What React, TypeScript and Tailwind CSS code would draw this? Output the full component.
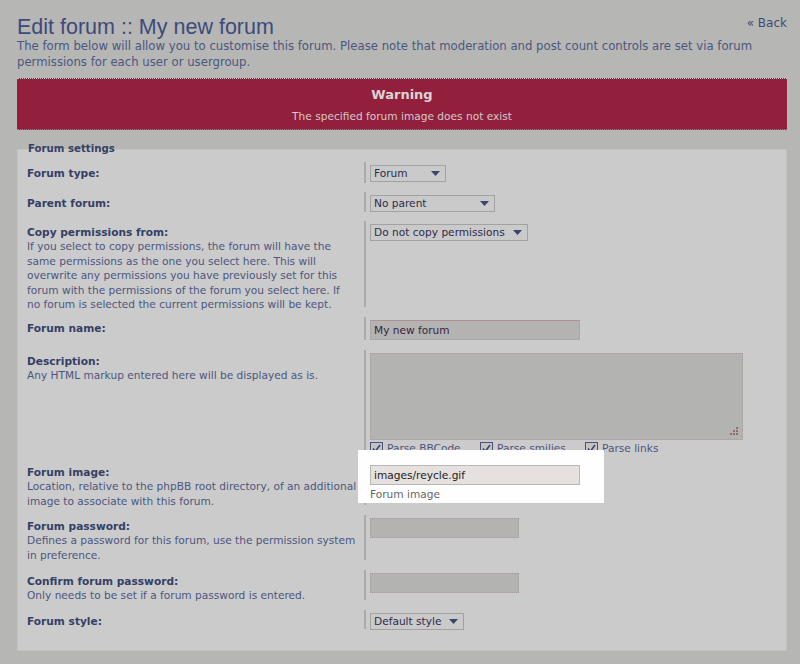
import React from "react";

const F = { fontFamily: '"DejaVu Sans", Verdana, sans-serif' };

function Arrow() {
  return (
    <svg width="9" height="5" viewBox="0 0 9 5" className="shrink-0">
      <path d="M0 0 H9 L4.5 5 Z" fill="#3b4470" />
    </svg>
  );
}

function Select({ label, w }: { label: string; w: string }) {
  return (
    <div className={`${w} h-[17px] flex items-center justify-between pl-[3px] pr-[5px] bg-[#cacaca] border border-[#a2a2a2] text-[10.6px] text-[#2e2a4a]`}>
      <span className="leading-none">{label}</span>
      <Arrow />
    </div>
  );
}

function Check({ label }: { label: string }) {
  return (
    <div className="flex items-center gap-[4px]">
      <svg width="13" height="13" viewBox="0 0 13 13">
        <rect x="0.5" y="0.5" width="12" height="12" fill="#c4c4c4" stroke="#4a5278" />
        <path d="M3 6.5 L5.3 9.5 L10 3" fill="none" stroke="#3b4470" strokeWidth="1.6" />
      </svg>
      <span className="text-[10.6px] text-[#4b5680] leading-none">{label}</span>
    </div>
  );
}

function Row({
  h,
  mt,
  label,
  desc,
  children,
}: {
  h: string;
  mt: string;
  label: string;
  desc?: React.ReactNode;
  children?: React.ReactNode;
}) {
  return (
    <div className={`flex ${h} ${mt}`}>
      <div className="w-[346px] pl-[9px] pt-[4px] pr-[7px] text-[10.6px] leading-[14.4px]">
        <div className="font-bold text-[#353f66]">{label}</div>
        {desc && <div className="text-[#4b5680]">{desc}</div>}
      </div>
      <div className="relative flex-1 border-l-2 border-[#ababab] pl-[4px] pt-[3px]">{children}</div>
    </div>
  );
}

export default function App() {
  return (
    <div style={F} className="w-[800px] h-[664px] overflow-hidden bg-[#b6b6b4] pl-[17px] pr-[13px] pt-[14px]">
      <div className="flex justify-between items-start">
        <h1
          style={{ fontFamily: '"Liberation Sans", Arial, sans-serif' }}
          className="text-[21.5px] leading-[26px] text-[#3d4a7c]"
        >
          Edit forum :: My new forum
        </h1>
        <a className="text-[12px] leading-[16px] text-[#3d4a7c] mt-[1px]">« Back</a>
      </div>
      <p className="text-[11.7px] leading-[16px] text-[#4b5680] mt-[-2px]">
        The form below will allow you to customise this forum. Please note that moderation and post count controls are set via forum permissions for each user or usergroup.
      </p>
      <div className="mt-[8px] h-[52px] bg-[#921f3b] border-t border-[#c8c8c8] border-b border-dotted border-b-[#b07080] flex flex-col items-center">
        <div className="font-bold text-[13px] leading-[16px] text-[#d8d4d6] mt-[8px]">Warning</div>
        <div className="text-[10.6px] leading-[14px] text-[#d2cacd] mt-[6px]">The specified forum image does not exist</div>
      </div>
      <fieldset className="mt-[12px] h-[509px] bg-[#cbcbcb] border border-[#c2c2c2] px-0 pb-0 pt-0 m-0">
        <legend className="ml-[9px] px-[1px] text-[10.2px] font-bold text-[#353f66] leading-[14px]">Forum settings</legend>
        <div className="pt-[6px]">
          <Row h="h-[21px]" mt="mt-0" label="Forum type:">
            <Select label="Forum" w="w-[76px]" />
          </Row>
          <Row h="h-[20px]" mt="mt-[9px]" label="Parent forum:">
            <Select label="No parent" w="w-[125px]" />
          </Row>
          <Row
            h="h-[86px]"
            mt="mt-[9px]"
            label="Copy permissions from:"
            desc={
              <>
                If you select to copy permissions, the forum will have the same permissions as the one you select here. This will overwrite any permissions you have previously set for this forum with the permissions of the forum you select here. If
                <br />
                no forum is selected the current permissions will be kept.
              </>
            }
          >
            <Select label="Do not copy permissions" w="w-[158px]" />
          </Row>
          <Row h="h-[23px]" mt="mt-[10px]" label="Forum name:">
            <div className="w-[210px] h-[20px] bg-[#b3b3b1] border border-[#a8a8a8] border-t-[#b09090] text-[10.6px] text-[#3b2340] pl-[3px] leading-[18px]">
              My new forum
            </div>
          </Row>
          <Row
            h="h-[103px]"
            mt="mt-[10px]"
            label="Description:"
            desc="Any HTML markup entered here will be displayed as is."
          >
            <div className="relative w-[373px] h-[87px] bg-[#b3b3b1] border border-dotted border-[#a89a9a]">
              <svg width="10" height="10" viewBox="0 0 10 10" className="absolute right-[3px] bottom-[3px]">
                <rect x="7" y="1" width="2" height="2" fill="#8a6e72" />
                <rect x="4" y="4" width="2" height="2" fill="#8a6e72" />
                <rect x="7" y="4" width="2" height="2" fill="#8a6e72" />
                <rect x="1" y="7" width="2" height="2" fill="#8a6e72" />
                <rect x="4" y="7" width="2" height="2" fill="#8a6e72" />
                <rect x="7" y="7" width="2" height="2" fill="#8a6e72" />
              </svg>
            </div>
            <div className="flex mt-[2px]">
              <div className="w-[110px]"><Check label="Parse BBCode" /></div>
              <div className="w-[105px]"><Check label="Parse smilies" /></div>
              <Check label="Parse links" />
            </div>
          </Row>
          <Row
            h="h-[44px]"
            mt="mt-[8px]"
            label="Forum image:"
            desc="Location, relative to the phpBB root directory, of an additional image to associate with this forum."
          >
            <div className="absolute left-[-8px] top-[-11px] w-[246px] h-[53px] bg-[#fefefe]" />
            <div className="relative mt-[1px]">
              <div className="w-[210px] h-[20px] bg-[#e6e1df] border border-[#b8b8b8] text-[10.6px] text-[#222] pl-[3px] leading-[18px]">
                images/reycle.gif
              </div>
              <div className="text-[10.6px] leading-[14px] text-[#666] mt-[2px]">Forum image</div>
            </div>
          </Row>
          <Row
            h="h-[45px]"
            mt="mt-[10px]"
            label="Forum password:"
            desc="Defines a password for this forum, use the permission system in preference."
          >
            <div className="w-[149px] h-[20px] bg-[#b3b3b1] border border-dotted border-[#a89a9a]" />
          </Row>
          <Row
            h="h-[30px]"
            mt="mt-[10px]"
            label="Confirm forum password:"
            desc="Only needs to be set if a forum password is entered."
          >
            <div className="w-[149px] h-[20px] bg-[#b3b3b1] border border-dotted border-[#a89a9a]" />
          </Row>
          <Row h="h-[19px]" mt="mt-[10px]" label="Forum style:">
            <Select label="Default style" w="w-[94px]" />
          </Row>
        </div>
      </fieldset>
    </div>
  );
}
